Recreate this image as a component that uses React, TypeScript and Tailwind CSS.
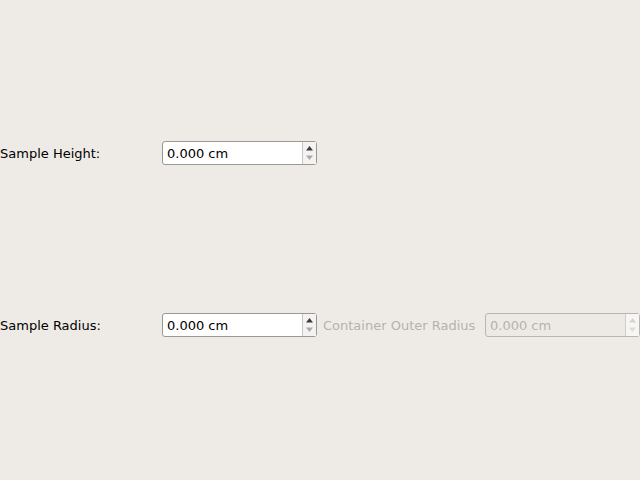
import React from "react";

function SpinBox({ disabled = false }: { disabled?: boolean }) {
  return (
    <div
      className={`flex h-[24px] w-[155px] rounded-[3px] border ${
        disabled ? "border-[#b9b6b1] bg-[#edeae6]" : "border-[#9a9893] bg-white"
      }`}
    >
      <div
        className={`flex flex-1 items-center pl-[4px] pt-[2px] text-[13px] ${
          disabled ? "text-[#b5b2ae]" : "text-black"
        }`}
      >
        0.000 cm
      </div>
      <div
        className={`flex w-[14px] flex-col border-l ${
          disabled ? "border-[#d0cdc8] bg-[#f7f6f4]" : "border-[#c9c6c1] bg-[#f4f3f1]"
        }`}
      >
        <div className="flex flex-1 items-center justify-center pt-[1px]">
          <svg width="9" height="6" viewBox="0 0 9 6">
            <path d="M1 5.5 L4.5 1 L8 5.5 Z" fill={disabled ? "#d6d3cf" : "#3c3c3c"} />
          </svg>
        </div>
        <div className="flex flex-1 items-center justify-center pb-[1px]">
          <svg width="9" height="6" viewBox="0 0 9 6">
            <path d="M1 0.5 L4.5 5 L8 0.5 Z" fill={disabled ? "#e0ddd9" : "#a9a9a9"} />
          </svg>
        </div>
      </div>
    </div>
  );
}

export default function App() {
  return (
    <div
      className="h-[480px] w-[640px] overflow-hidden bg-[#eeebe7] pt-[141px] text-[13px] text-black"
      style={{ fontFamily: '"DejaVu Sans", sans-serif' }}
    >
      <div className="flex items-center">
        <div className="w-[162px] pt-[2px]">Sample Height:</div>
        <SpinBox />
      </div>
      <div className="mt-[148px] flex items-center">
        <div className="w-[162px] pt-[2px]">Sample Radius:</div>
        <SpinBox />
        <div className="ml-[6px] w-[162px] pt-[2px] text-[#b5b2ae]">Container Outer Radius</div>
        <SpinBox disabled />
      </div>
    </div>
  );
}
